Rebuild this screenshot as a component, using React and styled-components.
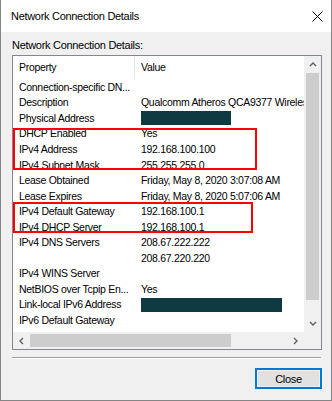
import styled, { createGlobalStyle } from 'styled-components';

const Global = createGlobalStyle`
	html, body { margin: 0; padding: 0; background: #f0f0f0; }
	body { font-family: "Liberation Sans", Arial, sans-serif; font-size: 10.5px; letter-spacing: -0.3px; color: #000; }
`

const ROW = 15.56;

const Window = styled.div`
	width: 332px;
	height: 401px;
	box-sizing: border-box;
	border: 1px solid #858585;
	border-top: none;
	background: #f0f0f0;
	display: flex;
	flex-direction: column;
`

const TitleBar = styled.div`
	height: 32px;
	background: #fff;
	display: flex;
	align-items: center;
	justify-content: space-between;
	padding: 0 8px 0 10px;
	font-size: 11px;
	flex-shrink: 0;
`

const CloseX = styled.svg`
	width: 11px;
	height: 11px;
`

const Body = styled.div`
	padding: 0 10px 0 11px;
	display: flex;
	flex-direction: column;
`

const Label = styled.div`
	height: 23px;
	line-height: 14px;
	padding-top: 6px;
	box-sizing: border-box;
	font-size: 11px;
`

const ListBox = styled.div`
	width: 310px;
	height: 295px;
	box-sizing: border-box;
	border: 1px solid #828790;
	background: #fff;
	display: grid;
	grid-template-columns: 291px 17px;
	grid-template-rows: 276px 17px;
`

const Content = styled.div`
	overflow: hidden;
	display: flex;
	flex-direction: column;
`

const Header = styled.div`
	height: 23px;
	flex-shrink: 0;
	display: flex;
	align-items: center;
`

const HeadCell = styled.div`
	width: ${p => p.$w}px;
	flex-shrink: 0;
	padding-left: 6px;
	box-sizing: border-box;
	height: 23px;
	line-height: 23px;
	border-right: ${p => p.$divider ? '1px solid #e5e5e5' : 'none'};
`

const Row = styled.div`
	height: ${ROW}px;
	flex-shrink: 0;
	display: flex;
	align-items: center;
	white-space: nowrap;
`

const Cell = styled.div`
	width: ${p => p.$w}px;
	flex-shrink: 0;
	padding-left: 6px;
	box-sizing: border-box;
	overflow: hidden;
	white-space: nowrap;
`

const Redacted = styled.span`
	display: inline-block;
	width: ${p => p.$w}px;
	height: 14px;
	background: #0f3a42;
	vertical-align: middle;
`

const Highlight = styled.div`
	position: relative;
	display: flex;
	flex-direction: column;

	&::after{
		content: '';
		position: absolute;
		left: 0;
		top: ${p => p.$top}px;
		bottom: ${p => p.$bottom}px;
		width: ${p => p.$w}px;
		border: 2.5px solid #ff0000;
		box-sizing: border-box;
		pointer-events: none;
	}
`

const VScroll = styled.div`
	background: #f0f0f0;
	display: flex;
	flex-direction: column;
	align-items: center;
`

const Arrow = styled.div`
	height: 17px;
	width: 17px;
	flex-shrink: 0;
	display: flex;
	align-items: center;
	justify-content: center;
`

const VThumb = styled.div`
	width: 13px;
	height: 227px;
	background: #cdcdcd;
`

const HScroll = styled.div`
	background: #f0f0f0;
	display: flex;
	align-items: center;
`

const HThumb = styled.div`
	height: 13px;
	width: 201px;
	background: #cdcdcd;
`

const Spacer = styled.div`
	flex: 1;
`

const Corner = styled.div`
	background: #f0f0f0;
`

const Separator = styled.div`
	margin-top: 7px;
	width: 309px;
	height: 1px;
	background: #a0a0a0;
	border-bottom: 1px solid #fff;
`

const Footer = styled.div`
	display: flex;
	justify-content: flex-end;
	padding-top: 9px;
	width: 310px;
`

const Button = styled.button`
	width: 67px;
	height: 21px;
	box-sizing: border-box;
	border: 2px solid #0078d7;
	background: #e1e1e1;
	box-shadow: inset 0 0 0 1px #e9f3fb;
	font-family: inherit;
	font-size: 11px;
	letter-spacing: -0.3px;
	color: #000;
	padding: 0;
`

const Chevron = ({ dir }) => {
	const paths = {
		up: 'M1 5 L4 2 L7 5',
		down: 'M1 2 L4 5 L7 2',
		left: 'M5 1 L2 4 L5 7',
		right: 'M2 1 L5 4 L2 7',
	};
	return (
		<svg width="8" height="8" viewBox="0 0 8 8">
			<path d={paths[dir]} fill="none" stroke="#606060" strokeWidth="1.4" />
		</svg>
	)
}

const before = [
	['Connection-specific DN...', ''],
	['Description', 'Qualcomm Atheros QCA9377 Wireless Network Adapter'],
	['Physical Address', { redact: 90 }],
];
const group1 = [
	['DHCP Enabled', 'Yes'],
	['IPv4 Address', '192.168.100.100'],
	['IPv4 Subnet Mask', '255.255.255.0'],
];
const middle = [
	['Lease Obtained', 'Friday, May 8, 2020 3:07:08 AM'],
	['Lease Expires', 'Friday, May 8, 2020 5:07:06 AM'],
];
const group2 = [
	['IPv4 Default Gateway', '192.168.100.1'],
	['IPv4 DHCP Server', '192.168.100.1'],
];
const after = [
	['IPv4 DNS Servers', '208.67.222.222'],
	['', '208.67.220.220'],
	['IPv4 WINS Server', ''],
	['NetBIOS over Tcpip En...', 'Yes'],
	['Link-local IPv6 Address', { redact: 141 }],
	['IPv6 Default Gateway', ''],
	['IPv6 DNS Servers', ''],
];

function Rows({ items }){
	return items.map(([k, v], i) => (
		<Row key={i}>
			<Cell $w={122}>{k}</Cell>
			<Cell $w={300}>{typeof v === 'object' ? <Redacted $w={v.redact} /> : v}</Cell>
		</Row>
	))
}

export default function App(){
	return(
		<>
			<Global />
			<Window>
				<TitleBar>
					<span>Network Connection Details</span>
					<CloseX viewBox="0 0 11 11">
						<path d="M0.5 0.5 L10.5 10.5 M10.5 0.5 L0.5 10.5" stroke="#000" strokeWidth="1" />
					</CloseX>
				</TitleBar>
				<Body>
					<Label>Network Connection Details:</Label>
					<ListBox>
						<Content>
							<Header>
								<HeadCell $w={122} $divider>Property</HeadCell>
								<HeadCell $w={160}>Value</HeadCell>
							</Header>
							<Rows items={before} />
							<Highlight $w={244} $top={2} $bottom={2}><Rows items={group1} /></Highlight>
							<Rows items={middle} />
							<Highlight $w={240} $top={-1} $bottom={1}><Rows items={group2} /></Highlight>
							<Rows items={after} />
						</Content>
						<VScroll>
							<Arrow><Chevron dir="up" /></Arrow>
							<VThumb />
							<Spacer />
							<Arrow><Chevron dir="down" /></Arrow>
						</VScroll>
						<HScroll>
							<Arrow><Chevron dir="left" /></Arrow>
							<HThumb />
							<Spacer />
							<Arrow><Chevron dir="right" /></Arrow>
						</HScroll>
						<Corner />
					</ListBox>
					<Separator />
					<Footer>
						<Button>Close</Button>
					</Footer>
				</Body>
			</Window>
		</>
	)
}
